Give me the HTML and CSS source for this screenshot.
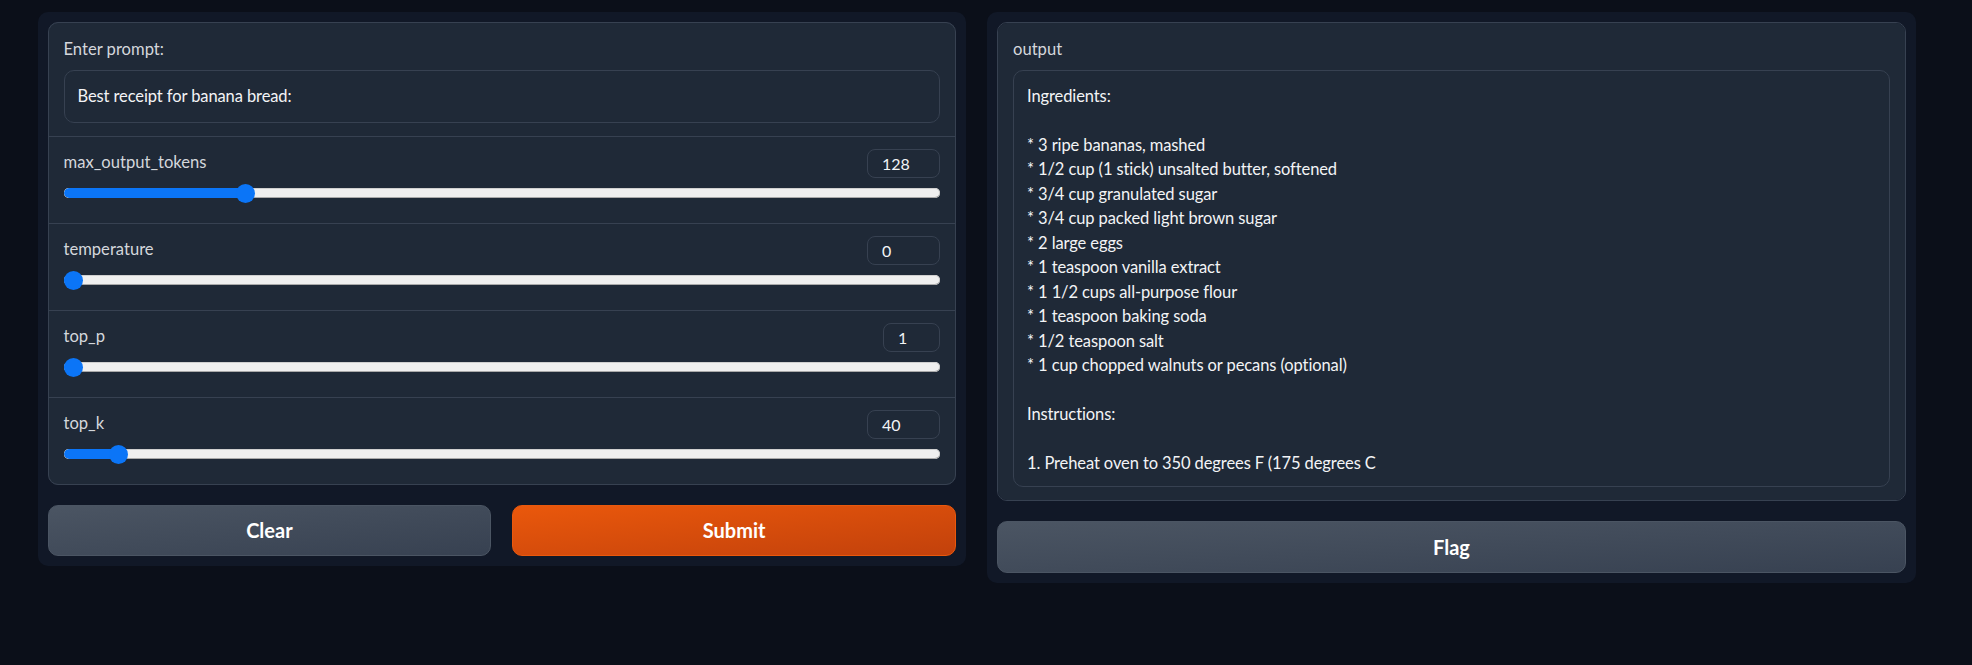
FILE: index.html
```html
<!DOCTYPE html>
<html>
<head>
<meta charset="utf-8">
<link rel="stylesheet" href="styles.css">
</head>
<body>
<div class="row">
  <div class="panel panel-left">
    <div class="form">
      <div class="block block-text">
        <div class="label">Enter prompt:</div>
        <div class="textbox textbox-prompt">Best receipt for banana bread:</div>
      </div>
      <div class="block block-slider">
        <div class="slider-head">
          <div class="label">max_output_tokens</div>
          <div class="num num-wide">128</div>
        </div>
        <div class="slider">
          <div class="track"><div class="fill" style="width:calc(9.5px + 0.201 * (100% - 19px))"></div></div>
          <span class="thumb" style="left:calc(0.201 * (100% - 19px))"></span>
        </div>
      </div>
      <div class="block block-slider">
        <div class="slider-head">
          <div class="label">temperature</div>
          <div class="num num-wide">0</div>
        </div>
        <div class="slider">
          <div class="track"><div class="fill" style="width:calc(9.5px + 0 * (100% - 19px))"></div></div>
          <span class="thumb" style="left:calc(0 * (100% - 19px))"></span>
        </div>
      </div>
      <div class="block block-slider">
        <div class="slider-head">
          <div class="label">top_p</div>
          <div class="num num-narrow">1</div>
        </div>
        <div class="slider">
          <div class="track"><div class="fill" style="width:calc(9.5px + 0 * (100% - 19px))"></div></div>
          <span class="thumb" style="left:calc(0 * (100% - 19px))"></span>
        </div>
      </div>
      <div class="block block-slider">
        <div class="slider-head">
          <div class="label">top_k</div>
          <div class="num num-wide">40</div>
        </div>
        <div class="slider">
          <div class="track"><div class="fill" style="width:calc(9.5px + 0.053 * (100% - 19px))"></div></div>
          <span class="thumb" style="left:calc(0.053 * (100% - 19px))"></span>
        </div>
      </div>
    </div>
    <div class="buttons">
      <button class="btn btn-secondary">Clear</button>
      <button class="btn btn-primary">Submit</button>
    </div>
  </div>
  <div class="panel panel-right">
    <div class="form">
      <div class="block block-text">
        <div class="label">output</div>
        <div class="textbox textbox-output">Ingredients:

* 3 ripe bananas, mashed
* 1/2 cup (1 stick) unsalted butter, softened
* 3/4 cup granulated sugar
* 3/4 cup packed light brown sugar
* 2 large eggs
* 1 teaspoon vanilla extract
* 1 1/2 cups all-purpose flour
* 1 teaspoon baking soda
* 1/2 teaspoon salt
* 1 cup chopped walnuts or pecans (optional)

Instructions:

1. Preheat oven to 350 degrees F (175 degrees C</div>
      </div>
    </div>
    <div class="buttons">
      <button class="btn btn-secondary">Flag</button>
    </div>
  </div>
</div>
</body>
</html>
```

FILE: styles.css
```css
* { box-sizing: border-box; }
html, body { margin: 0; }
body {
  background: #0b0f19;
  font-family: "Lato", "Open Sans", sans-serif;
  color: #f3f4f6;
  padding: 12px 0 0 37.5px;
  height: 665px;
  overflow: hidden;
}
.row {
  display: flex;
  gap: 21px;
  align-items: flex-start;
}
.panel {
  background: #111827;
  border-radius: 10px;
  padding: 10px;
  display: flex;
  flex-direction: column;
  gap: 20px;
}
.panel-left { width: 928.5px; }
.panel-right { width: 929px; }
.form {
  background: #374151;
  border: 1px solid #374151;
  border-radius: 10px;
  overflow: hidden;
  display: flex;
  flex-direction: column;
  gap: 1px;
}
.block {
  background: #1f2937;
  padding: 12.5px 15px;
}
.label {
  font-size: 16.6px;
  line-height: 26px;
  color: #d4d7dc;
}
.block-text .label { margin-bottom: 8.5px; }
.textbox {
  border: 1px solid #374151;
  border-radius: 10px;
  background: #1f2937;
  font-size: 16.5px;
  letter-spacing: -0.1px;
  line-height: 24.5px;
  padding: 13px 13px;
  color: #f3f4f6;
  white-space: pre-wrap;
}
.textbox-prompt { height: 53px; }
.textbox-output {
  height: 417px;
  overflow: hidden;
  padding: 12.5px 13px;
}
.block-slider {
  padding: 12.5px 15px 14.5px;
}
.slider-head {
  display: flex;
  justify-content: space-between;
  align-items: flex-start;
  height: 29px;
}
.num {
  height: 29px;
  border: 1px solid #374151;
  border-radius: 8px;
  font-size: 16px;
  line-height: 27px;
  padding: 0 14px;
  color: #f3f4f6;
}
.num-wide { width: 73px; }
.num-narrow { width: 57px; }
.slider {
  position: relative;
  height: 30px;
  display: flex;
  align-items: center;
}
.track {
  flex: 1;
  height: 9.5px;
  background: #efefef;
  border-radius: 5px;
  box-shadow: inset 0 -1px 0 #a9a9a9, inset 0 0 0 1px #cfcfcf;
  overflow: hidden;
}
.fill {
  height: 100%;
  background: #0b75f7;
  border-radius: 5px;
}
.thumb {
  position: absolute;
  top: 50%;
  width: 19px;
  height: 19px;
  margin-top: -9.5px;
  border-radius: 50%;
  background: #0b75f7;
}
.buttons {
  display: flex;
  gap: 21px;
}
.btn {
  flex: 1;
  height: 51px;
  border-radius: 10px;
  font-family: "Lato", "Open Sans", sans-serif;
  font-size: 20px;
  font-weight: 700;
  color: #ffffff;
  cursor: pointer;
}
.btn-secondary {
  background: linear-gradient(to bottom right, #4b5563, #374151);
  border: 1px solid #4b5563;
}
.panel-right .btn { height: 52px; }
.btn-primary {
  background: linear-gradient(to bottom right, #ea580c, #c2410c);
  border: 1px solid #ea580c;
}
```
